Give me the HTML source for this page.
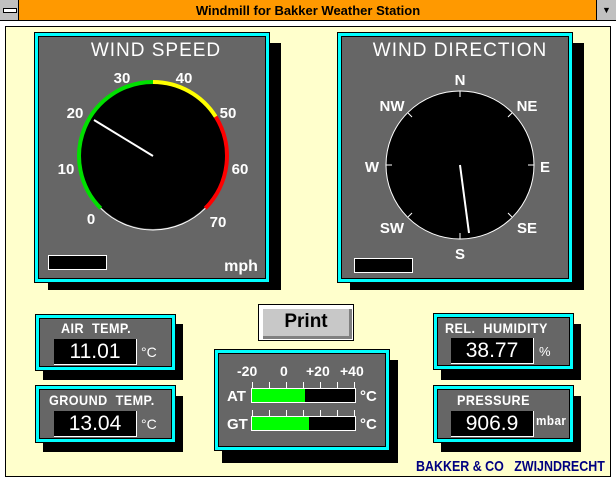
<!DOCTYPE html>
<html><head><style>
body{margin:0;width:616px;height:481px;overflow:hidden;background:#fff;font-family:"Liberation Sans",sans-serif;position:relative}
.a{position:absolute}
.cy{position:absolute;background:#00ffff;border:1px solid #000;box-sizing:border-box}
.gr{position:absolute;background:#666;border:1px solid #000;box-sizing:border-box;left:3px;top:3px;right:3px;bottom:3px}
.sh{position:absolute;background:#000}
.w{color:#fff}
.lb{position:absolute;color:#fff;font-size:14px;font-weight:bold;white-space:nowrap;transform:scaleX(0.9);transform-origin:left;letter-spacing:0.5px}
.val{position:absolute;background:#000;color:#fff;font-size:21px;text-align:center;border-right:1px solid #fff;border-bottom:1px solid #fff;box-sizing:border-box;line-height:25px}
</style></head><body>
<div class="a" style="left:0;top:0;width:616px;height:21px;background:#ff9900;border-bottom:1px solid #000;box-sizing:border-box"></div>
<div class="a" style="left:0;top:0;width:19px;height:20px;background:#c0c0c0;border-right:1px solid #000;box-sizing:border-box"><div class="a" style="left:3px;top:8px;width:12px;height:3px;background:#fff;border:1px solid #000"></div></div>
<div class="a" style="left:596px;top:0;width:20px;height:20px;background:#c0c0c0;border-left:1px solid #000;box-sizing:border-box;font-size:9px;text-align:center;line-height:20px">&#9660;</div>
<div class="a" style="left:0;top:2px;width:616px;text-align:center;font-weight:bold;font-size:13px;line-height:17px">Windmill for Bakker Weather Station</div>
<div class="a" style="left:5px;top:26px;width:606px;height:451px;background:#ffffcc;border:1px solid #000;box-sizing:border-box"></div>

<div class="sh" style="left:48px;top:43px;width:233px;height:247px"></div>
<div class="cy" style="left:34px;top:32px;width:236px;height:251px"><div class="gr"></div></div>
<div class="sh" style="left:350px;top:43px;width:234px;height:247px"></div>
<div class="cy" style="left:337px;top:32px;width:236px;height:251px"><div class="gr"></div></div>

<svg class="a" style="left:0;top:0" width="616" height="300" font-family="Liberation Sans" fill="#fff">
<text x="156" y="56" font-size="19" text-anchor="middle" letter-spacing="1">WIND  SPEED</text>
<circle cx="153" cy="156" r="73" fill="#000"/>
<path d="M100.7 208.3 A74 74 0 0 1 153 82" stroke="#00e000" stroke-width="4" fill="none"/>
<path d="M153 82 A74 74 0 0 1 215.7 116.7" stroke="#ffff00" stroke-width="4" fill="none"/>
<path d="M215.7 116.7 A74 74 0 0 1 205.3 208.3" stroke="#ff0000" stroke-width="4" fill="none"/>
<path d="M205.3 208.3 A74 74 0 0 1 100.7 208.3" stroke="#fff" stroke-width="1" fill="none"/>
<line x1="153" y1="156" x2="94" y2="120" stroke="#fff" stroke-width="2"/>
<g font-size="15" text-anchor="middle" font-weight="bold">
<text x="91" y="224">0</text><text x="66" y="174">10</text><text x="75" y="118">20</text><text x="122" y="83">30</text><text x="184" y="83">40</text><text x="228" y="118">50</text><text x="240" y="174">60</text><text x="218" y="227">70</text>
<text x="241" y="271" font-size="16">mph</text>
</g>
<rect x="48.5" y="255.5" width="58" height="14" fill="#000" stroke="#fff"/>

<text x="460" y="56" font-size="19" text-anchor="middle" letter-spacing="1">WIND  DIRECTION</text>
<circle cx="460" cy="165" r="74" fill="#000" stroke="#fff" stroke-width="1"/>
<g stroke="#fff"><line x1="460" y1="91" x2="460" y2="97"/><line x1="460" y1="239" x2="460" y2="233"/><line x1="386" y1="165" x2="392" y2="165"/><line x1="534" y1="165" x2="528" y2="165"/>
<line x1="408" y1="113" x2="412" y2="117"/><line x1="512" y1="113" x2="508" y2="117"/><line x1="408" y1="217" x2="412" y2="213"/><line x1="512" y1="217" x2="508" y2="213"/></g>
<line x1="460" y1="165" x2="469" y2="233" stroke="#fff" stroke-width="2"/>
<g font-size="15" text-anchor="middle" font-weight="bold">
<text x="460" y="85">N</text><text x="527" y="111">NE</text><text x="545" y="172">E</text><text x="527" y="233">SE</text><text x="460" y="259">S</text><text x="392" y="233">SW</text><text x="372" y="172">W</text><text x="392" y="111">NW</text>
</g>
<rect x="354.5" y="258.5" width="58" height="14" fill="#000" stroke="#fff"/>
</svg>

<div class="a" style="left:258px;top:304px;width:96px;height:37px;background:#fff;border:1px solid #000;box-sizing:border-box"><div class="a" style="left:4px;top:4px;right:1px;bottom:1px;background:#c8c8c8;border-right:3px solid #808080;border-bottom:3px solid #808080;font-weight:bold;font-size:19px;text-align:center;line-height:26px">Print</div></div>

<div class="sh" style="left:43px;top:324px;width:140px;height:56px"></div>
<div class="cy" style="left:35px;top:314px;width:141px;height:57px"><div class="gr"></div></div>
<div class="lb" style="left:61px;top:320px">AIR&nbsp; TEMP.</div>
<div class="val" style="left:54px;top:339px;width:83px;height:26px">11.01</div>
<div class="a w" style="left:141px;top:344px;font-size:14px">°C</div>

<div class="sh" style="left:43px;top:396px;width:140px;height:56px"></div>
<div class="cy" style="left:35px;top:385px;width:141px;height:58px"><div class="gr"></div></div>
<div class="lb" style="left:49px;top:392px">GROUND&nbsp; TEMP.</div>
<div class="val" style="left:54px;top:411px;width:83px;height:26px">13.04</div>
<div class="a w" style="left:141px;top:416px;font-size:14px">°C</div>

<div class="sh" style="left:441px;top:324px;width:140px;height:56px"></div>
<div class="cy" style="left:433px;top:313px;width:141px;height:57px"><div class="gr"></div></div>
<div class="lb" style="left:445px;top:320px">REL.&nbsp; HUMIDITY</div>
<div class="val" style="left:451px;top:338px;width:83px;height:26px">38.77</div>
<div class="a w" style="left:539px;top:344px;font-size:13px">%</div>

<div class="sh" style="left:441px;top:396px;width:140px;height:56px"></div>
<div class="cy" style="left:433px;top:385px;width:141px;height:58px"><div class="gr"></div></div>
<div class="lb" style="left:457px;top:392px">PRESSURE</div>
<div class="val" style="left:451px;top:411px;width:83px;height:26px">906.9</div>
<div class="lb" style="left:536px;top:413px;font-size:13px">mbar</div>

<div class="sh" style="left:222px;top:360px;width:176px;height:103px"></div>
<div class="cy" style="left:214px;top:349px;width:176px;height:102px"><div class="gr"></div></div>
<svg class="a" style="left:200px;top:290px" width="200" height="191" font-family="Liberation Sans" fill="#fff" font-size="14" font-weight="bold">
<text x="37" y="86">-20</text><text x="80" y="86">0</text><text x="106" y="86">+20</text><text x="140" y="86">+40</text>
<g stroke="#fff"><path d="M52.5 92v6M69.5 92v6M86.5 92v6M103.5 92v6M120.5 92v6M137.5 92v6M154.5 92v6M52.5 120v6M69.5 120v6M86.5 120v6M103.5 120v6M120.5 120v6M137.5 120v6M154.5 120v6"/></g>
<rect x="51.5" y="98.5" width="104" height="14" fill="#000" stroke="#fff"/><rect x="52" y="99" width="53" height="13" fill="#00ff00"/>
<rect x="51.5" y="126.5" width="104" height="14" fill="#000" stroke="#fff"/><rect x="52" y="127" width="57" height="13" fill="#00ff00"/>
<text x="27" y="111" font-size="15">AT</text><text x="27" y="139" font-size="15">GT</text><text x="160" y="111" font-size="15">°C</text><text x="160" y="139" font-size="15">°C</text>
</svg>

<div class="a" style="left:416px;top:458px;font-size:15px;color:#000080;font-weight:bold;white-space:nowrap;transform:scaleX(0.83);transform-origin:left">BAKKER &amp; CO &nbsp; ZWIJNDRECHT</div>
</body></html>
